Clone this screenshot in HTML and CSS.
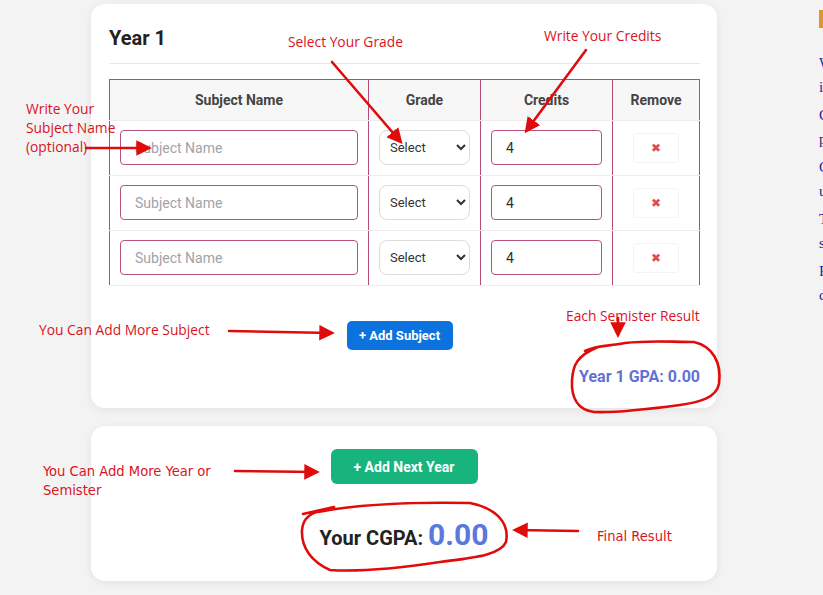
FILE: index.html
```html
<!DOCTYPE html>
<html lang="en">
<head>
<meta charset="utf-8">
<title>CGPA Calculator</title>
<link rel="stylesheet" href="styles.css">
</head>
<body>
<div class="page">
  <main class="main">
    <section class="card year-card">
      <h2 class="year-title">Year 1</h2>
      <table class="subjects">
        <colgroup>
          <col class="c-name"><col class="c-grade"><col class="c-credit"><col class="c-remove">
        </colgroup>
        <thead>
          <tr><th>Subject Name</th><th>Grade</th><th>Credits</th><th>Remove</th></tr>
        </thead>
        <tbody>
          <tr>
            <td><input class="field name-field" type="text" placeholder="Subject Name"></td>
            <td><select class="grade-select"><option>Select</option></select></td>
            <td><input class="field credit-field" type="text" value="4"></td>
            <td class="remove-cell"><button class="remove-btn">&#x2716;</button></td>
          </tr>
          <tr>
            <td><input class="field name-field" type="text" placeholder="Subject Name"></td>
            <td><select class="grade-select"><option>Select</option></select></td>
            <td><input class="field credit-field" type="text" value="4"></td>
            <td class="remove-cell"><button class="remove-btn">&#x2716;</button></td>
          </tr>
          <tr>
            <td><input class="field name-field" type="text" placeholder="Subject Name"></td>
            <td><select class="grade-select"><option>Select</option></select></td>
            <td><input class="field credit-field" type="text" value="4"></td>
            <td class="remove-cell"><button class="remove-btn">&#x2716;</button></td>
          </tr>
        </tbody>
      </table>
      <div class="add-row"><button class="btn btn-blue">+ Add Subject</button></div>
      <div class="gpa">Year 1 GPA: 0.00</div>
    </section>

    <section class="card total-card">
      <button class="btn btn-green">+ Add Next Year</button>
      <div class="cgpa">Your CGPA: <span class="cgpa-value">0.00</span></div>
    </section>
  </main>

  <aside class="sidebar">
    <div class="side-title">Related</div>
    <ul class="side-links">
      <li><a href="#">What is CGPA and how is it calculated</a></li>
      <li><a class="visited" href="#">Convert CGPA to percentage easily</a></li>
      <li><a href="#">Grade point scale for universities</a></li>
      <li><a class="visited" href="#">Tips to improve your semester GPA</a></li>
      <li><a href="#">Frequently asked questions</a></li>
    </ul>
  </aside>

  <div class="notes">
    <svg class="notes-svg" width="823" height="595" viewBox="0 0 823 595">
      <defs>
        <marker id="head" markerWidth="6" markerHeight="6" refX="4.5" refY="3" orient="auto" markerUnits="strokeWidth">
          <path d="M0,0 L6,3 L0,6 Z" fill="#e00b0b"/>
        </marker>
      </defs>
      <g stroke="#e00b0b" stroke-width="2.6" fill="none" stroke-linecap="round">
        <line x1="332" y1="62" x2="400" y2="141" marker-end="url(#head)"/>
        <line x1="586" y1="50" x2="527" y2="130" marker-end="url(#head)"/>
        <line x1="86" y1="148" x2="148" y2="148" marker-end="url(#head)"/>
        <line x1="229" y1="331" x2="331" y2="333" marker-end="url(#head)"/>
        <line x1="618" y1="318" x2="618" y2="334" marker-end="url(#head)"/>
        <line x1="235" y1="471" x2="316" y2="472" marker-end="url(#head)"/>
        <line x1="578" y1="531" x2="516" y2="530" marker-end="url(#head)"/>
        <path d="M585,351 C600,344 612,346 625,343 C650,340 670,342 694,342 C712,346 722,362 719,384 C716,398 700,402 680,405 C650,409 615,413 594,412 C578,410 571,398 572,380 C573,366 576,356 598,347 L612,345"/>
        <path d="M303,514 L334,507 M318,512 C360,504 420,502 470,503 C495,508 510,522 506,542 C500,556 470,558 440,562 C400,568 360,572 330,570 C312,562 301,548 302,530 C303,518 310,512 330,508"/>
      </g>
    </svg>
    <div class="note n-grade">Select Your Grade</div>
    <div class="note n-credits">Write Your Credits</div>
    <div class="note n-name">Write Your<br>Subject Name<br>(optional)</div>
    <div class="note n-subject">You Can Add More Subject</div>
    <div class="note n-each">Each Semister Result</div>
    <div class="note narrow n-year">You Can Add More Year or<br>Semister</div>
    <div class="note narrow n-final">Final Result</div>
  </div>
</div>
</body>
</html>
```

FILE: styles.css
```css
html, body {
  margin: 0;
  padding: 0;
}
body {
  background: #f3f3f3;
  font-family: Roboto, "Noto Sans", Arial, sans-serif;
  color: #222;
  overflow: hidden;
  width: 823px;
  height: 595px;
}
.page {
  position: relative;
  display: flex;
  align-items: flex-start;
  gap: 102px;
  padding: 4px 0 0 91px;
  width: 823px;
  height: 595px;
  box-sizing: border-box;
  overflow: hidden;
}
.main {
  flex: 0 0 625px;
  display: flex;
  flex-direction: column;
  gap: 18px;
}
.card {
  background: #fff;
  border-radius: 14px;
  box-shadow: 0 2px 10px rgba(0, 0, 0, 0.07);
  box-sizing: border-box;
}
.year-card {
  padding: 22px 17px 22px 18px;
  height: 404px;
}
.year-title {
  margin: 0 0 15px;
  font-size: 20px;
  line-height: 24px;
  font-weight: 700;
  color: #222;
  padding-bottom: 13px;
  border-bottom: 1px solid #e8e8e8;
}
.subjects {
  width: 590px;
  border-collapse: collapse;
  table-layout: fixed;
}
.c-name { width: 259px; }
.c-grade { width: 112px; }
.c-credit { width: 132px; }
.c-remove { width: 87px; }
.subjects th {
  background: #f7f7f7;
  height: 40px;
  font-size: 14px;
  font-weight: 700;
  color: #444;
  text-align: center;
  border-top: 1px solid #b54a78;
  border-left: 1px solid #b54a78;
  border-right: 1px solid #b54a78;
  border-bottom: 1px solid #ececec;
  padding: 0;
}
.subjects td {
  padding: 9px 10px 10px;
  border-left: 1px solid #b54a78;
  border-right: 1px solid #b54a78;
  border-bottom: 1px solid #ececec;
  vertical-align: middle;
}
.field {
  display: block;
  width: 100%;
  height: 35px;
  box-sizing: border-box;
  border: 1px solid #b8527f;
  border-radius: 4px;
  padding: 0 14px;
  font-family: Roboto, "Noto Sans", Arial, sans-serif;
  font-size: 14px;
  color: #333;
  background: #fff;
}
.field::placeholder {
  color: #a2a2aa;
}
.grade-select {
  display: block;
  width: 100%;
  height: 35px;
  box-sizing: border-box;
  border: 1px solid #dcdcdc;
  border-radius: 8px;
  padding: 0 6px;
  font-family: Roboto, "Noto Sans", Arial, sans-serif;
  font-size: 13px;
  color: #333;
  background: #fff;
}
.remove-cell {
  text-align: center;
}
.remove-btn {
  width: 46px;
  height: 30px;
  border: 1px solid #f4f4f4;
  border-radius: 3px;
  background: #fff;
  color: #e04a4a;
  font-size: 12px;
  font-family: "DejaVu Sans", sans-serif;
  padding: 0;
}
.add-row {
  display: flex;
  justify-content: center;
  margin-top: 35px;
  padding-right: 10px;
}
.btn {
  border: none;
  color: #fff;
  font-family: Roboto, "Noto Sans", Arial, sans-serif;
  font-weight: 700;
  cursor: pointer;
}
.btn-blue {
  background: #0c73de;
  width: 106px;
  height: 29px;
  border-radius: 5px;
  font-size: 13px;
  padding: 0;
}
.gpa {
  margin-top: 17px;
  text-align: right;
  font-size: 16px;
  line-height: 20px;
  font-weight: 700;
  color: #5f73d2;
}
.total-card {
  height: 155px;
  padding-top: 23px;
  display: flex;
  flex-direction: column;
  align-items: center;
}
.btn-green {
  background: #18b47e;
  width: 147px;
  height: 35px;
  border-radius: 6px;
  font-size: 14px;
  padding: 0;
}
.cgpa {
  margin-top: 33px;
  font-size: 20px;
  line-height: 36px;
  font-weight: 700;
  color: #222;
}
.cgpa-value {
  font-size: 30px;
  color: #5b78dc;
}
.sidebar {
  flex: 0 0 300px;
  padding-top: 6px;
  font-family: "Liberation Serif", serif;
}
.side-title {
  background: #e0952e;
  color: #e0952e;
  width: 8px;
  height: 18px;
  overflow: hidden;
  font-size: 16px;
}
.side-links {
  list-style: none;
  margin: 23px 0 0;
  padding: 0;
  width: 150px;
}
.side-links li {
  font-size: 15px;
  line-height: 24px;
  margin-bottom: 4px;
}
.side-links a {
  color: #1a23a8;
  text-decoration: none;
}
.side-links a.visited {
  color: #3a148a;
}
.notes {
  position: absolute;
  left: 0;
  top: 0;
  width: 823px;
  height: 595px;
  pointer-events: none;
}
.notes-svg {
  position: absolute;
  left: 0;
  top: 0;
}
.note {
  position: absolute;
  color: #d9141e;
  font-family: "Open Sans", "DejaVu Sans", sans-serif;
  font-size: 13.8px;
  line-height: 19px;
  white-space: nowrap;
}
.note.narrow {
  font-family: "DejaVu Sans Condensed", "Liberation Sans", sans-serif;
  font-size: 14.6px;
  line-height: 19px;
}
.n-grade { left: 288px; top: 32px; }
.n-credits { left: 544px; top: 26px; }
.n-name { left: 26px; top: 99px; }
.n-subject { left: 39px; top: 320px; }
.n-each { left: 566px; top: 306px; }
.n-year { left: 43px; top: 461px; }
.n-final { left: 597px; top: 526px; }
```
